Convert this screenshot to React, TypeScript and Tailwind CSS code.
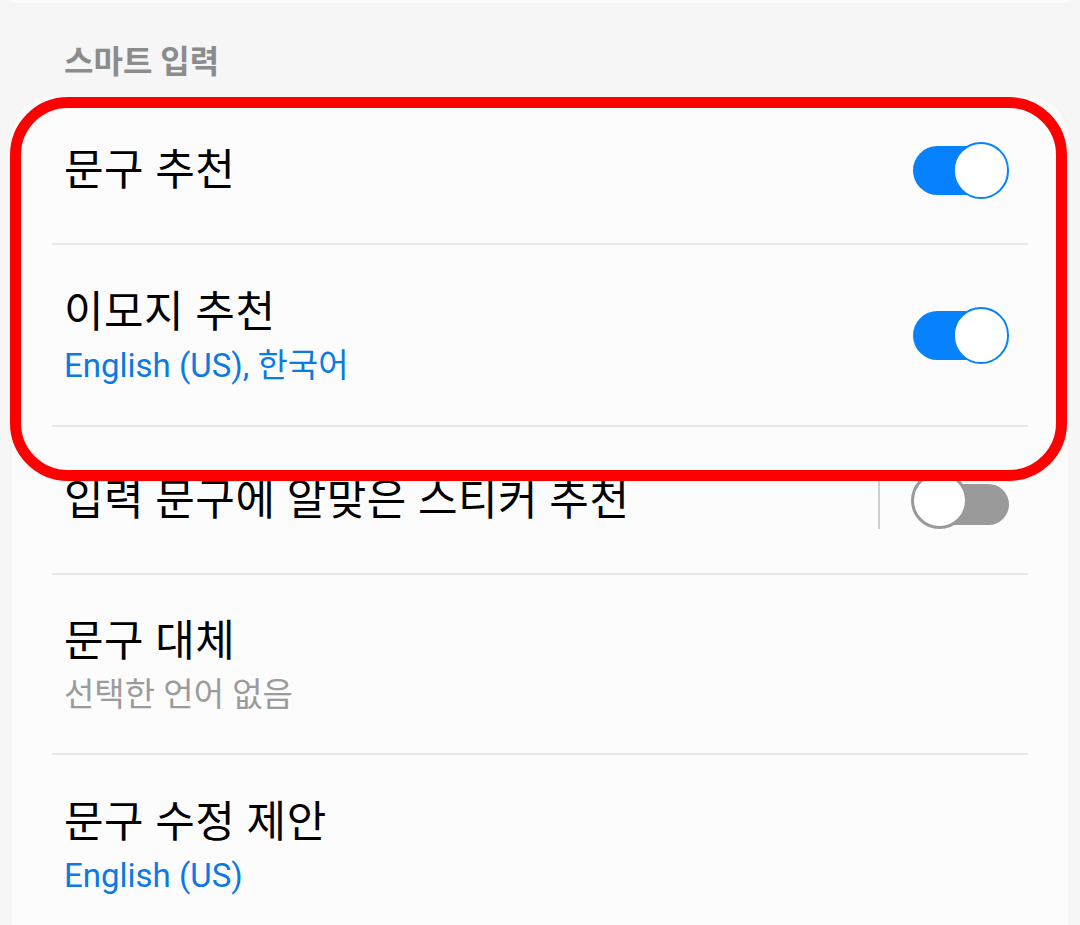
import React from 'react';

const font = { fontFamily: 'Roboto, "Noto Sans CJK KR", sans-serif' };

type Row = {
  title: string;
  sub?: string;
  subTone?: 'blue' | 'gray';
  toggle?: 'on' | 'off';
  split?: boolean;
  height: string;
};

const rows: Row[] = [
  { title: '문구 추천', toggle: 'on', height: 'h-[146px]' },
  { title: '이모지 추천', sub: 'English (US), 한국어', subTone: 'blue', toggle: 'on', height: 'h-[180px]' },
  { title: '입력 문구에 알맞은 스티커 추천', toggle: 'off', split: true, height: 'h-[146px]' },
  { title: '문구 대체', sub: '선택한 언어 없음', subTone: 'gray', height: 'h-[178px]' },
  { title: '문구 수정 제안', sub: 'English (US)', subTone: 'blue', height: 'h-[180px]' },
];

function Toggle({ on }: { on: boolean }) {
  if (on) {
    return (
      <div className="relative w-[96px] h-[57px] shrink-0">
        <div className="absolute left-0 top-[4px] w-[84px] h-[49px] rounded-full bg-[#0682fe]" />
        <div className="absolute right-0 top-0 w-[56px] h-[57px] rounded-full bg-white border-2 border-[#0682fe]" />
      </div>
    );
  }
  return (
    <div className="relative w-[98px] h-[57px] shrink-0">
      <div className="absolute right-0 top-[12px] w-[80px] h-[41px] rounded-full bg-[#9a9a9a]" />
      <div className="absolute left-0 top-0 w-[57px] h-[57px] rounded-full bg-white border-[3px] border-[#999999]" />
    </div>
  );
}

export default function App() {
  return (
    <div className="relative w-[1080px] h-[925px] overflow-hidden bg-[#f6f6f6]" style={font}>
      {/* bottom of the previous card */}
      <div className="mx-[12px] h-[3px] rounded-b-[40px] bg-[#fcfcfc]" />

      {/* section header */}
      <div className="h-[94px] pl-[64px] pt-[40px]">
        <p className="text-[32px] leading-[38px] font-bold text-[#8c8c8c]">스마트 입력</p>
      </div>

      {/* card */}
      <div className="mx-[12px] rounded-t-[40px] bg-[#fcfcfc] px-[40px] pb-[40px]">
        {rows.map((row, i) => (
          <div key={row.title}>
            {i > 0 && <div className="h-[2px] bg-[#e8e8e8]" />}
            <div className={`flex items-center ${row.height} pl-[12px] pr-[19px]`}>
              <div className={`flex-1 flex flex-col ${row.sub ? 'pt-[4px]' : ''}`}>
                <span className="text-[43px] leading-[52px] tracking-[0.5px] text-black">{row.title}</span>
                {row.sub && (
                  <span
                    className={`text-[33px] leading-[44px] mt-[6px] ${
                      row.subTone === 'blue' ? 'text-[#0b7be3]' : 'text-[#9b9b9b]'
                    }`}
                  >
                    {row.sub}
                  </span>
                )}
              </div>
              {row.split && <div className="w-[2px] h-[58px] bg-[#cfcfcf] mr-[31px]" />}
              {row.toggle && <Toggle on={row.toggle === 'on'} />}
            </div>
          </div>
        ))}
      </div>

      {/* red highlight annotation */}
      <div className="absolute left-[10px] top-[97px] w-[1057px] h-[384px] border-[11px] border-[#ff0000] rounded-[58px]" />
    </div>
  );
}
